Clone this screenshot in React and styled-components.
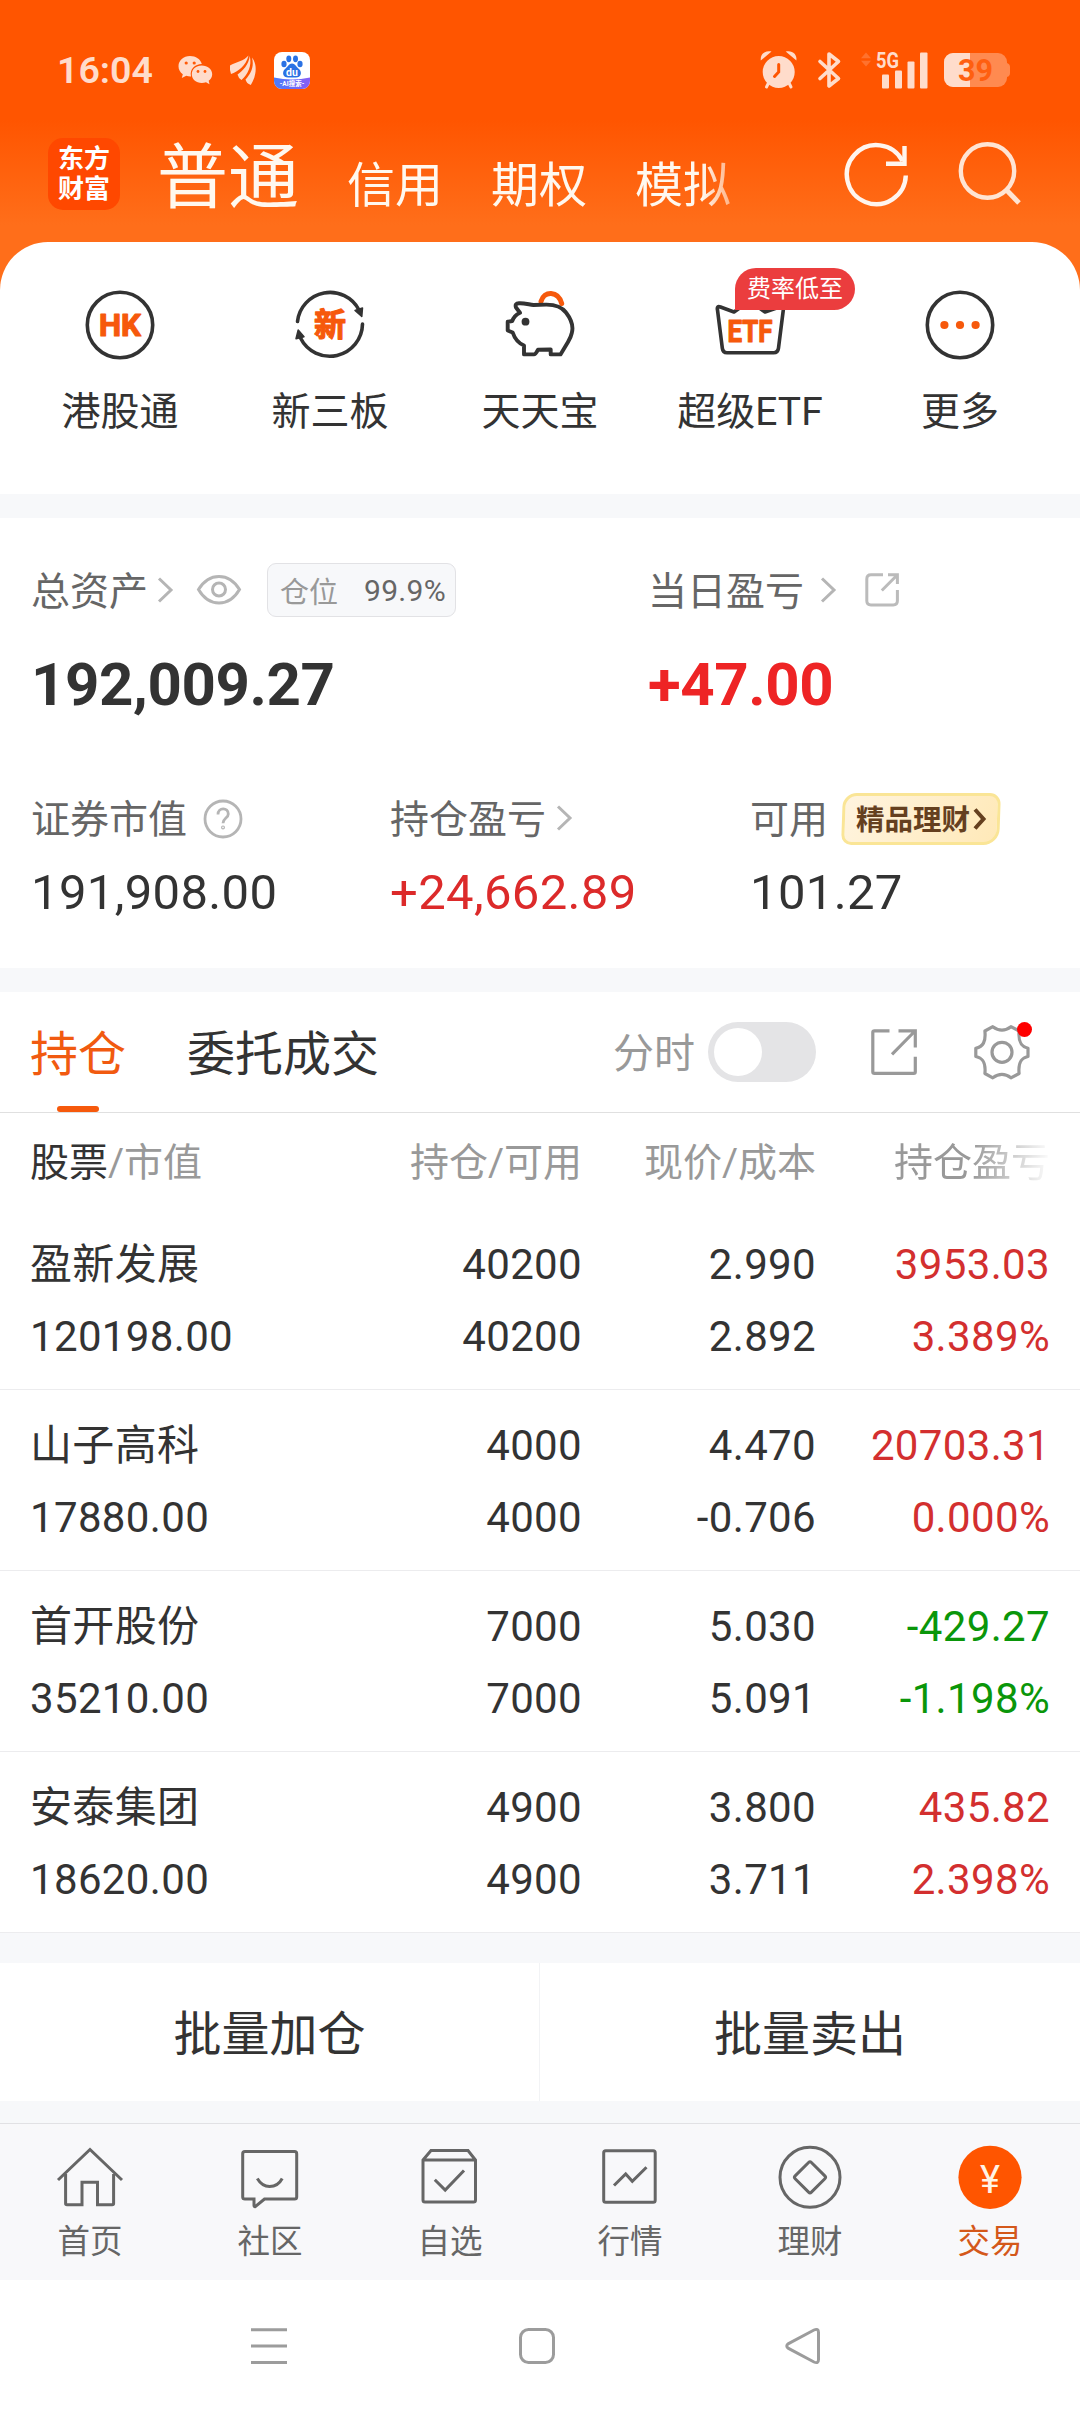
import styled, { createGlobalStyle } from "styled-components";

const holdings = [
  {
    name: "盈新发展",
    value: "120198.00",
    amount: "40200",
    available: "40200",
    price: "2.990",
    cost: "2.892",
    profit: "3953.03",
    rate: "3.389%",
  },
  {
    name: "山子高科",
    value: "17880.00",
    amount: "4000",
    available: "4000",
    price: "4.470",
    cost: "-0.706",
    profit: "20703.31",
    rate: "0.000%",
  },
  {
    name: "首开股份",
    value: "35210.00",
    amount: "7000",
    available: "7000",
    price: "5.030",
    cost: "5.091",
    profit: "-429.27",
    rate: "-1.198%",
  },
  {
    name: "安泰集团",
    value: "18620.00",
    amount: "4900",
    available: "4900",
    price: "3.800",
    cost: "3.711",
    profit: "435.82",
    rate: "2.398%",
  },
];

const shortcuts = [
  { label: "港股通", icon: <HkIcon /> },
  { label: "新三板", icon: <NewBoardIcon /> },
  { label: "天天宝", icon: <PiggyIcon /> },
  { label: "超级ETF", icon: <EtfIcon />, badge: "费率低至" },
  { label: "更多", icon: <MoreIcon /> },
];

const navItems = [
  { label: "首页", icon: <HomeIcon /> },
  { label: "社区", icon: <CommunityIcon /> },
  { label: "自选", icon: <WatchlistIcon /> },
  { label: "行情", icon: <MarketIcon /> },
  { label: "理财", icon: <WealthIcon /> },
  { label: "交易", icon: <TradeIcon />, active: true },
];

export default function App() {
  return (
    <Page>
      <GlobalStyle />
      <Hero>
        <StatusBar>
          <Clock>16:04</Clock>
          <StatusIcons>
            <WechatIcon />
            <SwooshIcon />
            <BaiduIcon />
          </StatusIcons>
          <StatusIcons $end>
            <AlarmIcon />
            <BluetoothIcon />
            <SignalIcon />
            <BatteryIcon />
          </StatusIcons>
        </StatusBar>
        <TitleBar>
          <Logo>
            东方
            <br />
            财富
          </Logo>
          <AccountTabs>
            <AccountTab $active>普通</AccountTab>
            <AccountTab>信用</AccountTab>
            <AccountTab>期权</AccountTab>
            <AccountTab>模拟</AccountTab>
          </AccountTabs>
          <TitleActions>
            <RefreshIcon />
            <SearchIcon />
          </TitleActions>
        </TitleBar>
        <Shortcuts>
          {shortcuts.map((item) => (
            <Shortcut key={item.label}>
              {item.icon}
              <span>{item.label}</span>
              {item.badge && <Badge>{item.badge}</Badge>}
            </Shortcut>
          ))}
        </Shortcuts>
      </Hero>

      <Band $height={24} />

      <Assets>
        <TotalsRow>
          <div>
            <Label>
              <LabelText>总资产</LabelText>
              <Chevron $left={9} />
              <EyeIcon />
              <PositionTag>
                仓位 <b>99.9%</b>
              </PositionTag>
            </Label>
            <Total>192,009.27</Total>
          </div>
          <div>
            <Label>
              <LabelText>当日盈亏</LabelText>
              <Chevron $left={16} />
              <SmallShareIcon />
            </Label>
            <Total $up>+47.00</Total>
          </div>
        </TotalsRow>
        <DetailsRow>
          <div>
            <Label>
              <LabelText>证券市值</LabelText>
              <HelpIcon />
            </Label>
            <Amount>191,908.00</Amount>
          </div>
          <div>
            <Label>
              <LabelText>持仓盈亏</LabelText>
              <Chevron $left={10} />
            </Label>
            <Amount $up>+24,662.89</Amount>
          </div>
          <div>
            <Label>
              <LabelText>可用</LabelText>
              <WealthTag>
                <span>精品理财</span>
                <svg width="13" height="22" viewBox="0 0 13 22">
                  <path
                    d="M2 1.5 L10.5 11 L2 20.5"
                    fill="none"
                    stroke="#65401f"
                    strokeWidth="4"
                  />
                </svg>
              </WealthTag>
            </Label>
            <Amount>101.27</Amount>
          </div>
        </DetailsRow>
      </Assets>

      <Band $height={24} />

      <TabBar>
        <Tab $active>持仓</Tab>
        <Tab>委托成交</Tab>
        <Tools>
          <LabelText>分时</LabelText>
          <Toggle />
          <ShareIcon />
          <Settings>
            <GearIcon />
            <Dot />
          </Settings>
        </Tools>
      </TabBar>

      <HeadRow>
        <HeadCell>
          <b>股票</b>/市值
        </HeadCell>
        <HeadCell>持仓/可用</HeadCell>
        <HeadCell>现价/成本</HeadCell>
        <HeadCell $fade>持仓盈亏</HeadCell>
      </HeadRow>
      {holdings.map((item) => (
        <Row key={item.name}>
          <Cell>
            {item.name}
            <span>{item.value}</span>
          </Cell>
          <Cell>
            {item.amount}
            <span>{item.available}</span>
          </Cell>
          <Cell>
            {item.price}
            <span>{item.cost}</span>
          </Cell>
          <Cell $trend={item.profit.startsWith("-") ? "down" : "up"}>
            {item.profit}
            <span>{item.rate}</span>
          </Cell>
        </Row>
      ))}

      <Band $height={30} />
      <BatchActions>
        <BatchButton type="button">批量加仓</BatchButton>
        <BatchButton type="button">批量卖出</BatchButton>
      </BatchActions>
      <Band $height={22} />

      <BottomNav>
        {navItems.map((item) => (
          <NavItem key={item.label} $active={item.active}>
            {item.icon}
            <span>{item.label}</span>
          </NavItem>
        ))}
      </BottomNav>

      <SystemBar>
        <svg width="36" height="36" viewBox="0 0 36 36">
          <path d="M0 1.8 H36 M0 18 H36 M0 34.4 H36" />
        </svg>
        <svg width="36" height="36" viewBox="0 0 36 36">
          <rect x="2.5" y="1.5" width="33" height="33" rx="8" />
        </svg>
        <svg width="36" height="36" viewBox="0 0 36 36">
          <path d="M3.5 15.6 L29 2 Q33.5 0 33.5 4.5 V31.5 Q33.5 36 29 34 L3.5 20.4 Q0 18 3.5 15.6 Z" />
        </svg>
      </SystemBar>
    </Page>
  );
}

/* status bar icons */

function WechatIcon() {
  return (
    <svg width="36" height="32" viewBox="0 0 36 32" fill="#ffdccb">
      <path d="M12 2 C5.5 2 0.5 6.5 0.5 12.2 C0.5 15.5 2.2 18.4 4.8 20.2 L3.8 24 L8.3 21.8 Q10.5 22.5 13 22.4 C11.5 15 17 10 23.8 10 C22.6 5.2 17.8 2 12 2 Z" />
      <path d="M23.8 11.6 C18 11.6 13.8 15.5 13.8 20.3 C13.8 25.2 18 29 23.8 29 Q26 29 28 28.3 L31.5 30.2 L30.7 26.8 C32.8 25.2 34.2 22.9 34.2 20.3 C34.2 15.5 29.6 11.6 23.8 11.6 Z" />
      <g fill="#ff5a08">
        <circle cx="8.2" cy="9" r="1.6" />
        <circle cx="16.2" cy="9" r="1.6" />
        <circle cx="20" cy="17.5" r="1.4" />
        <circle cx="27" cy="17.5" r="1.4" />
      </g>
    </svg>
  );
}

function SwooshIcon() {
  return (
    <svg width="32" height="34" viewBox="0 0 32 34" fill="#ffdccb">
      <path d="M20.5 2.5 C16 8 8 9 2 12.5 Q1.5 17 3 21 C10 18.5 18 13 20.5 2.5 Z" />
      <path d="M21.8 3 C20.5 12 15 17.5 9.5 21.5 Q10.5 25.5 13.5 27 C20 21 24 13 21.8 3 Z" />
      <path d="M24 4.5 C26.5 14 22.5 21 17.5 26.5 Q18.5 30.5 22.8 32 C28 24 30 12 24 4.5 Z" />
    </svg>
  );
}

function BaiduIcon() {
  return (
    <svg width="36" height="37" viewBox="0 0 36 37">
      <defs>
        <linearGradient id="strip" x1="0" x2="1">
          <stop offset="0" stopColor="#4a7dfb" />
          <stop offset="1" stopColor="#8a5df5" />
        </linearGradient>
        <clipPath id="tile">
          <rect width="36" height="37" rx="8" />
        </clipPath>
      </defs>
      <g clipPath="url(#tile)">
        <rect width="36" height="37" fill="#fff" />
        <path d="M0 25.5 Q18 29.5 36 25.5 V37 H0 Z" fill="url(#strip)" />
      </g>
      <g fill="#2a72e4">
        <ellipse cx="10" cy="12" rx="2.6" ry="3.2" />
        <ellipse cx="14.8" cy="6.8" rx="2.5" ry="3.4" />
        <ellipse cx="21.5" cy="6.8" rx="2.5" ry="3.4" />
        <ellipse cx="26" cy="12" rx="2.6" ry="3.2" />
        <path d="M18 11.5 C21 11.5 22.5 15 25 17 C28.5 20.5 27 25.5 22 25.5 H14 C9 25.5 7.5 20.5 11 17 C13.5 15 15 11.5 18 11.5 Z" />
      </g>
      <SvgText x="18" y="23.8" $size={10.5} $color="#fff">
        du
      </SvgText>
      <SvgText x="18" y="34.3" $size={6.5} $color="#fff">
        -AI搜索-
      </SvgText>
    </svg>
  );
}

function AlarmIcon() {
  return (
    <svg width="42" height="40" viewBox="0 0 42 40">
      <g fill="none" stroke="#ffdccb" strokeLinecap="round">
        <path d="M8.5 33 L6.5 37 M29 33 L31 37" strokeWidth="3" />
      </g>
      <circle cx="18.7" cy="22" r="16" fill="#ffdccb" />
      <path d="M0.8 10.5 C0 4 5 0 11.5 1.5 Z" fill="#ffdccb" />
      <path d="M36.4 10.5 C37.2 4 32.2 0 25.7 1.5 Z" fill="#ffdccb" />
      <path
        d="M18.7 14.5 V22 L14.5 26.5"
        fill="none"
        stroke="#ff5500"
        strokeWidth="3"
        strokeLinecap="round"
      />
    </svg>
  );
}

function BluetoothIcon() {
  return (
    <svg width="28" height="38" viewBox="0 0 28 38">
      <path
        d="M4 10.5 L22.5 27.5 L13 35 V3 L22.5 10.5 L4 27.5"
        fill="none"
        stroke="#ffdccb"
        strokeWidth="3.6"
        strokeLinecap="round"
        strokeLinejoin="round"
      />
    </svg>
  );
}

function SignalIcon() {
  return (
    <svg width="72" height="38" viewBox="0 0 72 38" fill="#ffdccb">
      <path d="M3 7.3 L8 1.5 L13 7.3 Z M3 9.8 L8 15.5 L13 9.8 Z" opacity="0.22" />
      <rect x="24" y="23.5" width="7" height="14" rx="1" />
      <rect x="37" y="19.5" width="7" height="18" rx="1" />
      <rect x="49.5" y="10.5" width="7" height="27" rx="1" />
      <rect x="62" y="1.5" width="7.5" height="36" rx="1" />
      <SvgText
        x="29.5"
        y="17.2"
        $size={22}
        $color="#ffdccb"
        textLength="23"
        lengthAdjust="spacingAndGlyphs"
      >
        5G
      </SvgText>
    </svg>
  );
}

function BatteryIcon() {
  return (
    <svg width="66" height="34" viewBox="0 0 66 34">
      <clipPath id="cell">
        <rect width="63" height="34" rx="9" />
      </clipPath>
      <path d="M63 10 Q66 11 66 14 V20 Q66 23 63 24 Z" fill="#ff8a50" />
      <g clipPath="url(#cell)">
        <rect width="63" height="34" fill="#ff8a50" />
        <rect width="26" height="34" fill="#ffdccb" />
      </g>
      <SvgText x="31.5" y="28" $size={30.5} $color="#ff5f10">
        39
      </SvgText>
    </svg>
  );
}

/* title bar icons */

function RefreshIcon() {
  return (
    <svg
      width="64"
      height="66"
      viewBox="0 0 64 66"
      fill="none"
      stroke="#fff5ee"
      strokeWidth="4.4"
    >
      <path d="M60.8 34.5 A29.5 29.5 0 1 1 57.5 20" />
      <path d="M59.5 5 V22.8 H41" />
    </svg>
  );
}

function SearchIcon() {
  return (
    <svg
      width="64"
      height="66"
      viewBox="0 0 64 66"
      fill="none"
      stroke="#ffe4d3"
      strokeWidth="4.4"
    >
      <circle cx="28.5" cy="30" r="26.7" />
      <path d="M47.5 49 L60 62" strokeWidth="5" />
    </svg>
  );
}

/* shortcut icons */

function HkIcon() {
  return (
    <svg width="76" height="76" viewBox="0 0 76 76">
      <circle
        cx="38"
        cy="38"
        r="32.7"
        fill="none"
        stroke="#333"
        strokeWidth="3.6"
      />
      <SvgText
        x="38"
        y="49.3"
        $size={32}
        textLength="42"
        lengthAdjust="spacingAndGlyphs"
        $round
      >
        HK
      </SvgText>
    </svg>
  );
}

function NewBoardIcon() {
  return (
    <svg width="76" height="76" viewBox="0 0 76 76">
      <g fill="none" stroke="#333" strokeWidth="3.6" strokeLinecap="round">
        <path d="M5.5 34.5 A32.7 32.7 0 0 1 67 23" />
        <path d="M70.5 37 A32.7 32.7 0 0 1 8.5 51" />
      </g>
      <path
        d="M63 23.5 L70.5 21 L69.8 29.5 Z M6.2 43 L4 51.8 L12 49.8 Z"
        fill="#333"
        stroke="#333"
        strokeWidth="1.5"
        strokeLinejoin="round"
      />
      <SvgText x="38" y="49" $size={32} $round>
        新
      </SvgText>
    </svg>
  );
}

function PiggyIcon() {
  return (
    <svg width="76" height="76" viewBox="0 0 76 76">
      <path
        d="M39 14.5 C42 3.5 56 3.5 59.7 16.5"
        fill="none"
        stroke="#f6590c"
        strokeWidth="5"
        strokeLinecap="round"
      />
      <path
        d="M18 25.7 L14 20.5 Q12.5 16.5 17 16.3 C22 16 27 17.5 31.5 18 L44 17.6 C54 17.5 60 20 64 25.5 C69 32 71.5 40 69.8 46 Q69 50 66 55 L58.5 67.4 H48.7 V62.5 L36 62.8 Q33.5 67.4 32 67.4 H22 V58.5 C16 56 12.5 51 10.7 45.5 L5.7 43.5 V34.7 L10.3 34 Q12 28.5 18 25.7 Z"
        fill="#fff"
        stroke="#333"
        strokeWidth="3.9"
        strokeLinejoin="round"
      />
      <circle cx="23.5" cy="34.7" r="3.9" fill="#333" />
    </svg>
  );
}

function EtfIcon() {
  return (
    <svg width="76" height="76" viewBox="0 0 76 76">
      <path
        d="M5.5 23 Q4.5 18.5 8.5 20 L22 25 L37.5 14 L53 25 L67.5 20 Q71.8 18.5 71.3 23 L66.5 61 Q66 65.7 61.5 65.7 H15 Q10.8 65.7 10.3 61 Z"
        fill="none"
        stroke="#333"
        strokeWidth="3.6"
        strokeLinejoin="round"
      />
      <SvgText
        x="38"
        y="55.3"
        $size={31}
        textLength="45"
        lengthAdjust="spacingAndGlyphs"
        $round
      >
        ETF
      </SvgText>
    </svg>
  );
}

function MoreIcon() {
  return (
    <svg width="76" height="76" viewBox="0 0 76 76">
      <circle
        cx="38"
        cy="38"
        r="32.7"
        fill="none"
        stroke="#333"
        strokeWidth="3.6"
      />
      <g fill="#f6590c">
        <circle cx="22.4" cy="38" r="4.1" />
        <circle cx="38" cy="38" r="4.1" />
        <circle cx="53.6" cy="38" r="4.1" />
      </g>
    </svg>
  );
}

/* assets icons */

function Chevron({ $left }) {
  return (
    <ChevronSvg $left={$left} width="16" height="28" viewBox="0 0 16 28">
      <path d="M2 2.5 L14 14 L2 25.5" />
    </ChevronSvg>
  );
}

function EyeIcon() {
  return (
    <EyeSvg width="46" height="32" viewBox="0 0 46 32">
      <path d="M2.5 15.5 C13 -2 33 -2 43.5 15.5 C33 33.5 13 33.5 2.5 15.5 Z" />
      <circle cx="23" cy="15.5" r="6.5" />
    </EyeSvg>
  );
}

function SmallShareIcon() {
  return (
    <SmallShareSvg width="36" height="36" viewBox="0 0 36 36">
      <path d="M19 2.8 H7 Q2.8 2.8 2.8 7 V28.8 Q2.8 33 7 33 H29.2 Q33.4 33 33.4 28.8 V18" />
      <path d="M24 2.8 H33.4 V12 M33 3.2 L17.8 18.5" />
    </SmallShareSvg>
  );
}

function HelpIcon() {
  return (
    <HelpSvg width="40" height="40" viewBox="0 0 40 40">
      <circle cx="20" cy="21" r="18" />
      <path d="M15 16.5 C15 9 25.3 9 25.3 16 C25.3 20 20 20.3 20 25.3" />
      <circle cx="20" cy="29.4" r="0.6" />
    </HelpSvg>
  );
}

/* toolbar icons */

function ShareIcon() {
  return (
    <svg
      width="48"
      height="48"
      viewBox="0 0 48 48"
      fill="none"
      stroke="#999"
      strokeWidth="3.2"
    >
      <path d="M19.5 2.8 H4.5 Q2.8 2.8 2.8 4.5 V43.7 Q2.8 45.3 4.5 45.3 H43.7 Q45.3 45.3 45.3 43.7 V28.7" />
      <path d="M28.5 2.8 H45.3 V19.5 M45 3 L22 26.3" />
    </svg>
  );
}

function GearIcon() {
  return (
    <svg
      width="60"
      height="60"
      viewBox="0 0 60 60"
      fill="none"
      stroke="#999"
      strokeWidth="3.2"
      strokeLinejoin="round"
    >
      <path d="M20.8 4.7 Q30 11.5 38.9 4.7 L47.1 9 C46 20 49 24.5 56 26.3 V34.5 C49 36 46 40.5 47.1 51.5 L38.9 55.8 Q30 49 20.8 55.8 L12.9 51.5 C14 40.5 11 36 3.8 34.5 V26.3 C11 24.5 14 20 12.9 9 Z" />
      <circle cx="30" cy="30.3" r="10" />
    </svg>
  );
}

/* bottom navigation icons */

function HomeIcon() {
  return (
    <NavSvg viewBox="0 0 72 72">
      <path d="M4 39 L36 8.5 L68 39" />
      <path d="M11.6 33 V62.5 Q11.6 63.8 13 63.8 H28 V41.3 H43.5 V63.8 H58.2 Q59.6 63.8 59.6 62.5 V33" />
    </NavSvg>
  );
}

function CommunityIcon() {
  return (
    <NavSvg viewBox="0 0 72 72">
      <path d="M11 10.5 H60.5 Q62.7 10.5 62.7 12.7 V56 Q62.7 58 60.5 58 H30.5 L21.5 65.5 Q20 66 20 64.5 V58 H11 Q8.7 58 8.7 56 V12.7 Q8.7 10.5 11 10.5 Z" />
      <path d="M23.3 37.5 Q28 45.5 35.6 45.5 Q44 45.5 48.2 37.5" />
    </NavSvg>
  );
}

function WatchlistIcon() {
  return (
    <NavSvg viewBox="0 0 72 72">
      <path d="M9 19 L17 9.5 H54 L61.5 19 V59 Q61.5 61 59.5 61 H11 Q9 61 9 59 Z M9 19 H61.5" />
      <path d="M20.8 38.7 L31.2 49 L50 29.5" />
    </NavSvg>
  );
}

function MarketIcon() {
  return (
    <NavSvg viewBox="0 0 72 72">
      <rect x="9.7" y="9.7" width="51.5" height="51.5" rx="2" />
      <path d="M20 44.5 L31.7 33 L38.3 40.3 L52.5 26.3" />
    </NavSvg>
  );
}

function WealthIcon() {
  return (
    <NavSvg viewBox="0 0 72 72">
      <circle cx="36" cy="36.3" r="30" />
      <rect
        x="24.5"
        y="24.8"
        width="23"
        height="23"
        rx="2"
        transform="rotate(45 36 36.3)"
      />
    </NavSvg>
  );
}

function TradeIcon() {
  return (
    <svg width="72" height="72" viewBox="0 0 72 72">
      <circle cx="36" cy="36.3" r="31.6" fill="#ff5500" />
      <SvgText x="36" y="52" $size={38} $color="#fff3e6" $regular>
        ¥
      </SvgText>
    </svg>
  );
}

const GlobalStyle = createGlobalStyle`
  * {
    box-sizing: border-box;
  }
  body {
    margin: 0;
    background: #fff;
    font-family: Roboto, "Noto Sans CJK SC", sans-serif;
    color: #333;
  }
  svg {
    display: block;
    flex: none;
    overflow: visible;
  }
`;

const Page = styled.main`
  width: 1080px;
  height: 2412px;
  overflow: hidden;
`;

const SvgText = styled.text`
  font-family: Roboto, "Noto Sans CJK SC", sans-serif;
  font-weight: ${(props) => (props.$regular ? 400 : 700)};
  font-size: ${(props) => props.$size}px;
  fill: ${(props) => props.$color || "#f6590c"};
  text-anchor: middle;
  stroke: ${(props) => (props.$round ? "#f6590c" : "none")};
  stroke-width: 1.2;
  stroke-linejoin: round;
`;

const Hero = styled.header`
  background: linear-gradient(#ff5500 120px, #ff6e1a 225px);
`;

const StatusBar = styled.div`
  display: flex;
  align-items: center;
  height: 124px;
  padding: 16px 70px 0 57px;
`;

const Clock = styled.div`
  width: 121px;
  font-weight: 600;
  font-size: 37.5px;
  line-height: 44px;
  color: #ffdccb;
`;

const StatusIcons = styled.div`
  display: flex;
  align-items: center;
  gap: 14px;
  margin-left: ${(props) => (props.$end ? "auto" : "0")};
`;

const TitleBar = styled.div`
  display: flex;
  align-items: center;
  height: 118px;
  padding: 0 57px 18px 48px;
`;

const Logo = styled.div`
  width: 72px;
  height: 72px;
  padding-top: 6px;
  border-radius: 15px;
  background: #ff4800;
  font-weight: 700;
  font-size: 26px;
  line-height: 30px;
  text-align: center;
  color: #fff;
`;

const AccountTabs = styled.nav`
  display: flex;
  align-items: baseline;
  gap: 48px;
  width: 580px;
  margin-left: 37px;
  padding-top: 15px;
  mask-image: linear-gradient(90deg, #000 545px, transparent 605px);
`;

const AccountTab = styled.span`
  font-size: ${(props) => (props.$active ? 71 : 48)}px;
  line-height: 100px;
  color: #fff8ef;
  white-space: nowrap;
`;

const TitleActions = styled.div`
  display: flex;
  gap: 50px;
  margin-left: auto;
`;

const Shortcuts = styled.section`
  display: grid;
  grid-template-columns: repeat(5, 210px);
  height: 252px;
  padding: 45px 15px 0;
  border-radius: 48px 48px 0 0;
  background: #fff;
`;

const Shortcut = styled.div`
  position: relative;
  display: flex;
  flex-direction: column;
  align-items: center;
  gap: 22px;
  font-size: 39px;
  line-height: 54px;
`;

const Badge = styled.div`
  position: absolute;
  top: -19px;
  left: 90px;
  width: 120px;
  height: 42px;
  border-radius: 21px 21px 21px 0;
  background: #eb3d3e;
  font-size: 24px;
  line-height: 42px;
  text-align: center;
  color: #fff;
`;

const Band = styled.div`
  height: ${(props) => props.$height}px;
  background: #f7f8fa;
`;

const Assets = styled.section`
  height: 450px;
  padding: 45px 0 0 31px;
`;

const Label = styled.div`
  display: flex;
  align-items: center;
  height: 54px;
  font-size: 39px;
  color: #666;
`;

const LabelText = styled.span`
  padding-bottom: 4px;
`;

const TotalsRow = styled.div`
  display: grid;
  grid-template-columns: 617px 1fr;
`;

const DetailsRow = styled.div`
  display: grid;
  grid-template-columns: 359px 360px 1fr;
  margin-top: 67px;
`;

const Total = styled.div`
  margin-top: 29px;
  font-weight: 700;
  font-size: 60px;
  line-height: 78px;
  letter-spacing: -0.4px;
  color: ${(props) => (props.$up ? "#ee2425" : "#333")};
`;

const Amount = styled.div`
  margin-top: 18px;
  font-size: 49px;
  line-height: 60px;
  letter-spacing: 0.35px;
  color: ${(props) => (props.$up ? "#dc2a2a" : "#333")};
`;

const ChevronSvg = styled.svg`
  margin-left: ${(props) => props.$left}px;
  fill: none;
  stroke: #b5b5b5;
  stroke-width: 3;
`;

const EyeSvg = styled.svg`
  margin-left: 23px;
  fill: none;
  stroke: #b5b5b5;
  stroke-width: 3;
`;

const SmallShareSvg = styled.svg`
  margin-left: 28px;
  fill: none;
  stroke: #bbb;
  stroke-width: 3;
`;

const HelpSvg = styled.svg`
  margin-left: 16px;
  fill: none;
  stroke: #b5b5b5;
  stroke-width: 2.8;
`;

const PositionTag = styled.div`
  display: flex;
  align-items: center;
  justify-content: space-between;
  width: 189px;
  height: 54px;
  margin-left: 25px;
  padding: 0 9px 0 12px;
  border: 1px solid #e2e2e5;
  border-radius: 9px;
  background: #f7f8fa;
  font-size: 29px;
  color: #999;
  b {
    font-weight: 400;
    font-size: 30px;
    letter-spacing: 0.3px;
    color: #666;
  }
`;

const WealthTag = styled.div`
  position: relative;
  display: flex;
  align-items: center;
  gap: 3px;
  width: 158px;
  height: 52px;
  margin: 1px 0 0 14px;
  padding-left: 14px;
  font-weight: 700;
  font-size: 28.5px;
  color: #65401f;
  z-index: 0;
  &::before {
    content: "";
    position: absolute;
    inset: 0;
    z-index: -1;
    border: 3px solid #fae596;
    border-radius: 14px 11px 16px 10px;
    background: linear-gradient(115deg, #fff4df, #ffe9b8);
    transform: skewX(-2deg);
  }
  span {
    padding-bottom: 2px;
  }
`;

const TabBar = styled.div`
  display: flex;
  align-items: center;
  gap: 61px;
  height: 121px;
  padding: 0 48px 0 30px;
  border-bottom: 1px solid #e0e0e0;
`;

const Tab = styled.div`
  position: relative;
  padding-top: 5px;
  font-size: 48px;
  line-height: 115px;
  color: ${(props) => (props.$active ? "#f15a10" : "#333")};
  &::after {
    content: "";
    display: ${(props) => (props.$active ? "block" : "none")};
    position: absolute;
    left: 27px;
    bottom: 0;
    width: 42px;
    height: 6px;
    border-radius: 3px;
    background: #f6590c;
  }
`;

const Tools = styled.div`
  display: flex;
  align-items: center;
  margin-left: auto;
  font-size: 41px;
  color: #999;
`;

const Toggle = styled.div`
  width: 108px;
  height: 60px;
  margin: 0 54px 0 13px;
  padding: 6px;
  border-radius: 30px;
  background: #e4e4e6;
  &::before {
    content: "";
    display: block;
    width: 48px;
    height: 48px;
    border-radius: 24px;
    background: #fff;
  }
`;

const Settings = styled.div`
  position: relative;
  margin-left: 54px;
`;

const Dot = styled.span`
  position: absolute;
  top: 0;
  right: 0;
  width: 15px;
  height: 15px;
  border-radius: 50%;
  background: #fe0000;
`;

const HeadRow = styled.div`
  display: grid;
  grid-template-columns: 318px 234px 234px 234px;
  height: 96px;
  padding-left: 30px;
`;

const HeadCell = styled.div`
  font-size: 39px;
  line-height: 101px;
  text-align: right;
  color: #999;
  &:first-child {
    text-align: left;
  }
  b {
    font-weight: 400;
    color: #333;
  }
  mask-image: ${(props) =>
    props.$fade
      ? "linear-gradient(90deg, #000 155px, transparent 236px)"
      : "none"};
`;

const Row = styled.div`
  display: grid;
  grid-template-columns: 318px 234px 234px 234px;
  height: 181px;
  padding: 20px 0 0 30px;
  border-bottom: 1px solid #ececee;
`;

const trendColors = { up: "#d32f2f", down: "#0a960a" };

const Cell = styled.div`
  font-size: 42px;
  line-height: 72px;
  letter-spacing: 0.35px;
  text-align: right;
  color: ${(props) => trendColors[props.$trend] || "#333"};
  &:first-child {
    text-align: left;
  }
  span {
    display: block;
  }
`;

const BatchActions = styled.div`
  display: grid;
  grid-template-columns: 540px 540px;
  height: 138px;
`;

const BatchButton = styled.button`
  padding: 0 0 4px;
  border: none;
  background: #fff;
  font-family: inherit;
  font-size: 48px;
  color: #333;
  &:first-child {
    border-right: 1px solid #f2f3f5;
  }
`;

const BottomNav = styled.nav`
  display: grid;
  grid-template-columns: repeat(6, 180px);
  height: 157px;
  border-top: 1px solid #e1e1e4;
  background: #f8f8fa;
`;

const NavItem = styled.div`
  display: flex;
  flex-direction: column;
  align-items: center;
  gap: 9px;
  padding-top: 17px;
  font-size: 32.5px;
  line-height: 40px;
  color: ${(props) => (props.$active ? "#d4581a" : "#666")};
`;

const NavSvg = styled.svg`
  width: 72px;
  height: 72px;
  fill: none;
  stroke: #666;
  stroke-width: 3;
`;

const SystemBar = styled.div`
  display: flex;
  align-items: center;
  gap: 231px;
  height: 132px;
  padding-left: 251px;
  svg {
    fill: none;
    stroke: #9c9c9c;
    stroke-width: 3;
  }
`;
